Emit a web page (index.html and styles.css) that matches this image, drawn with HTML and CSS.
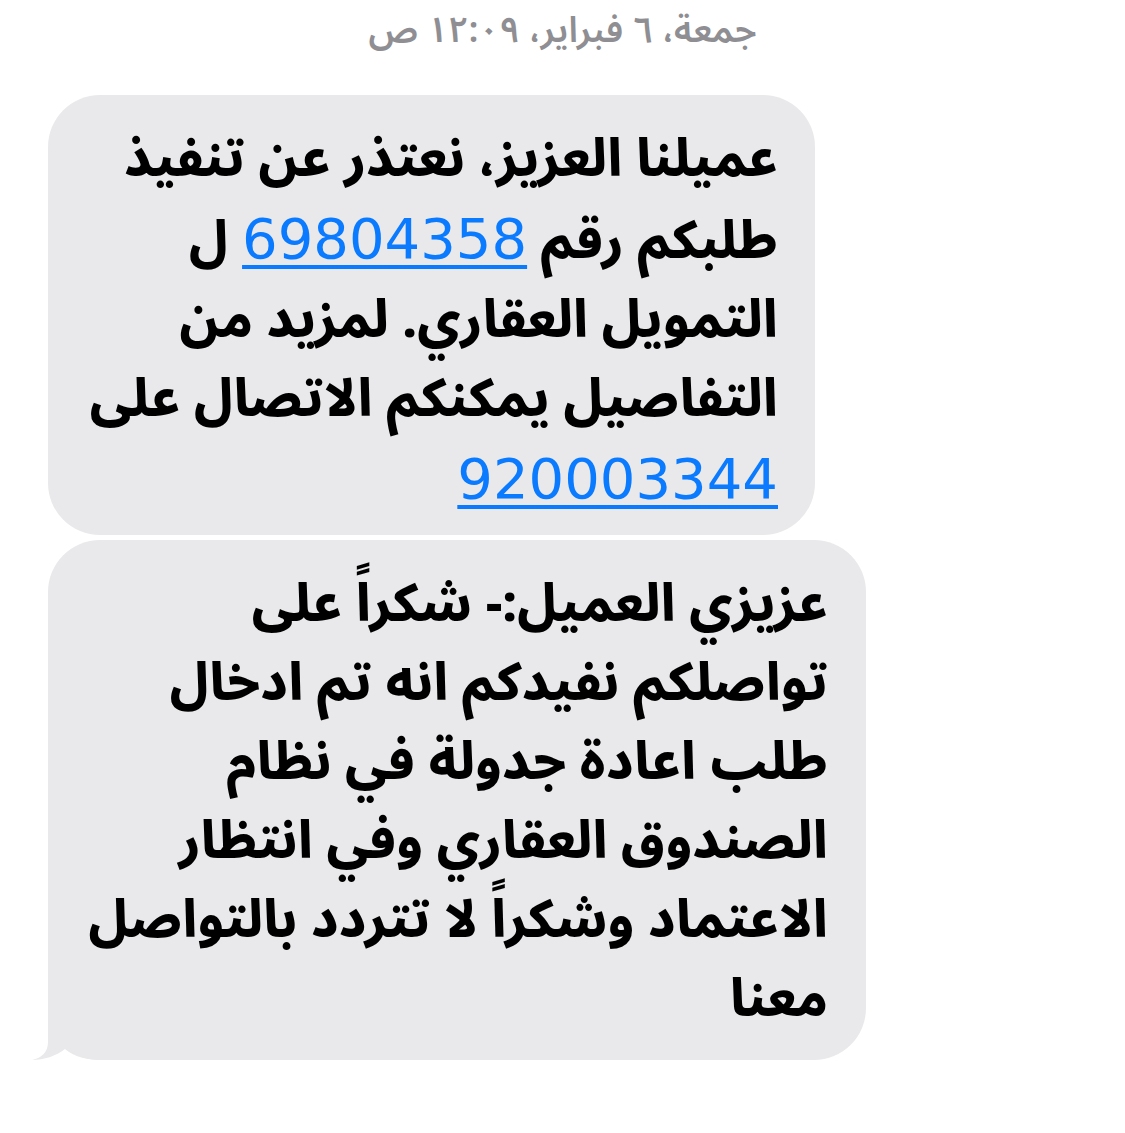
FILE: index.html
```html
<!DOCTYPE html>
<html lang="ar" dir="rtl">
<head>
    <meta charset="UTF-8">
    <meta name="viewport" content="width=device-width, initial-scale=1.0">
    <title>الرسائل</title>
    <link rel="stylesheet" href="styles.css">
</head>
<body>
    <div class="thread">
        <!-- وقت المحادثة -->
        <div class="stamp">جمعة، ٦ فبراير، ١٢:٠٩ ص</div>

        <div class="msg msg_first">
            <p>عميلنا العزيز، نعتذر عن تنفيذ<br>
            طلبكم رقم <a class="num" href="#">69804358</a> ل<br>
            التمويل العقاري. لمزيد من<br>
            التفاصيل يمكنكم الاتصال على<br>
            <a class="num" href="#">920003344</a></p>
        </div>

        <div class="msg msg_last">
            <p>عزيزي العميل:- شكراً على<br>
            تواصلكم نفيدكم انه تم ادخال<br>
            طلب اعادة جدولة في نظام<br>
            الصندوق العقاري وفي انتظار<br>
            الاعتماد وشكراً لا تتردد بالتواصل<br>
            معنا</p>
            <!-- ذيل الفقاعة -->
            <svg class="tail" width="72" height="60" viewBox="0 0 72 60">
                <path d="M16 0 L16 42 C16 52 10 58 0 60 C12 60 24 56 33 49 C42 57 55 60 72 60 L72 0 Z" fill="#e9e9eb"/>
            </svg>
        </div>
    </div>
</body>
</html>
```

FILE: styles.css
```css
*{
    padding: 0;
    margin: 0;
    box-sizing: border-box;
}
body{
    background-color: #fff;
    width: 1125px;
    height: 1133px;
    overflow: hidden;
}
.thread{
    display: flex;
    flex-direction: column;
    padding-left: 48px;
    direction: ltr;
}
.stamp{
    direction: rtl;
    height: 95px;
    margin-left: -48px;
    padding-top: 2px;
    text-align: center;
    font-family: "Noto Sans Arabic", "DejaVu Sans", sans-serif;
    font-size: 36px;
    font-weight: 600;
    line-height: 58px;
    color: #8e8e93;
}
.msg{
    position: relative;
    direction: rtl;
    background-color: #e9e9eb;
    border-radius: 52px;
    align-self: flex-start;
}
.msg p{
    font-family: "Noto Sans Arabic", "DejaVu Sans", sans-serif;
    font-size: 52px;
    font-weight: 800;
    line-height: 79px;
    color: #000;
    text-align: right;
    white-space: nowrap;
}
.msg_first{
    width: 767px;
    height: 440px;
    padding: 25px 37px 0 20px;
}
.msg_last{
    width: 818px;
    height: 520px;
    margin-top: 5px;
    padding: 25px 38px 0 20px;
}
/* أرقام قابلة للضغط */
.num{
    font-family: "DejaVu Sans", sans-serif;
    font-size: 56px;
    font-weight: 400;
    color: #0a7aff;
    text-decoration: underline;
    text-decoration-thickness: 4px;
    text-underline-offset: 7px;
}
.tail{
    position: absolute;
    left: -16px;
    bottom: 0;
}
```
